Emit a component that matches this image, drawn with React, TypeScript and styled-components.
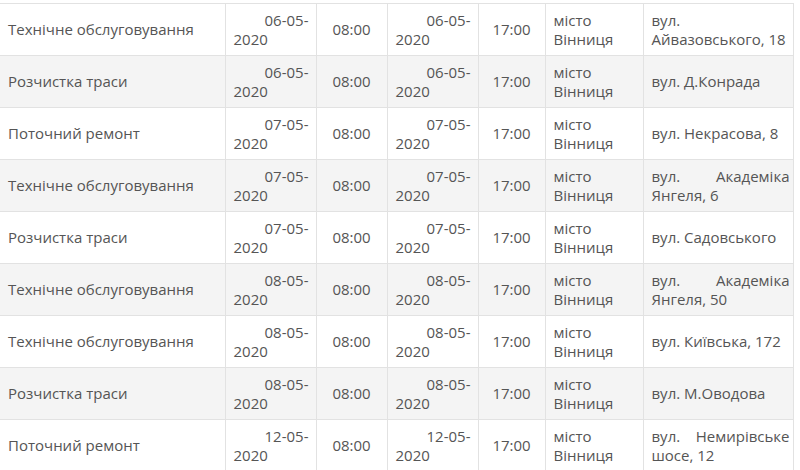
import { FC } from 'react';
import styled, { createGlobalStyle } from 'styled-components';

type Row = {
  work: string;
  startDate: string;
  startTime: string;
  endDate: string;
  endTime: string;
  city: string;
  street: string;
};

const columnWidths = [225, 91, 71, 91, 67, 98, 150];

const rows: Row[] = [
  { work: 'Технічне обслуговування', startDate: '06-05-2020', startTime: '08:00', endDate: '06-05-2020', endTime: '17:00', city: 'місто Вінниця', street: 'вул. Айвазовського, 18' },
  { work: 'Розчистка траси', startDate: '06-05-2020', startTime: '08:00', endDate: '06-05-2020', endTime: '17:00', city: 'місто Вінниця', street: 'вул. Д.Конрада' },
  { work: 'Поточний ремонт', startDate: '07-05-2020', startTime: '08:00', endDate: '07-05-2020', endTime: '17:00', city: 'місто Вінниця', street: 'вул. Некрасова, 8' },
  { work: 'Технічне обслуговування', startDate: '07-05-2020', startTime: '08:00', endDate: '07-05-2020', endTime: '17:00', city: 'місто Вінниця', street: 'вул. Академіка Янгеля, 6' },
  { work: 'Розчистка траси', startDate: '07-05-2020', startTime: '08:00', endDate: '07-05-2020', endTime: '17:00', city: 'місто Вінниця', street: 'вул. Садовського' },
  { work: 'Технічне обслуговування', startDate: '08-05-2020', startTime: '08:00', endDate: '08-05-2020', endTime: '17:00', city: 'місто Вінниця', street: 'вул. Академіка Янгеля, 50' },
  { work: 'Технічне обслуговування', startDate: '08-05-2020', startTime: '08:00', endDate: '08-05-2020', endTime: '17:00', city: 'місто Вінниця', street: 'вул. Київська, 172' },
  { work: 'Розчистка траси', startDate: '08-05-2020', startTime: '08:00', endDate: '08-05-2020', endTime: '17:00', city: 'місто Вінниця', street: 'вул. М.Оводова' },
  { work: 'Поточний ремонт', startDate: '12-05-2020', startTime: '08:00', endDate: '12-05-2020', endTime: '17:00', city: 'місто Вінниця', street: 'вул. Немирівське шосе, 12' },
];

const GlobalStyle = createGlobalStyle`
  body {
    margin: 0;
    background: #fff;
    font-family: 'Open Sans', 'Noto Sans', sans-serif;
  }
`;

// дата ламається після другого дефіса: перший рядок праворуч, рік ліворуч
const DateValue: FC<{ value: string }> = ({ value }) => (
  <>
    <DateHead>{value.slice(0, 6)}</DateHead>
    <DateTail>{value.slice(6)}</DateTail>
  </>
);

const App: FC = () => {
  return (
    <Root>
      <GlobalStyle />
      <Table>
        <colgroup>
          {columnWidths.map((w, i) => (
            <Col key={i} $width={w} />
          ))}
        </colgroup>
        <tbody>
          {rows.map((row, i) => (
            <Tr key={i} $striped={i % 2 === 1}>
              <Td>{row.work}</Td>
              <Td>
                <DateValue value={row.startDate} />
              </Td>
              <TimeTd>{row.startTime}</TimeTd>
              <Td>
                <DateValue value={row.endDate} />
              </Td>
              <TimeTd>{row.endTime}</TimeTd>
              <Td>{row.city}</Td>
              <StreetTd>{row.street}</StreetTd>
            </Tr>
          ))}
        </tbody>
      </Table>
    </Root>
  );
};

const Root = styled.div`
  width: 800px;
  height: 470px;
  overflow: hidden;
  padding-top: 3px;
  box-sizing: border-box;
`;

const Table = styled.table`
  width: 793px;
  border-collapse: collapse;
  table-layout: fixed;
  font-size: 15px;
  line-height: 19px;
  color: #555;
`;

const Col = styled.col<{ $width: number }>`
  width: ${({ $width }) => $width}px;
`;

const Tr = styled.tr<{ $striped: boolean }>`
  height: 52px;
  background: ${({ $striped }) => ($striped ? '#f4f4f4' : '#fff')};
`;

const Td = styled.td`
  border: 1px solid #e2e2e2;
  padding: 6px 7px 6px 8px;
  vertical-align: middle;
  text-align: left;

  &:first-child {
    border-left: none;
  }
`;

const TimeTd = styled(Td)`
  text-align: center;
  padding-left: 4px;
  padding-right: 4px;
`;

const StreetTd = styled(Td)`
  text-align: justify;
  padding-right: 3px;
`;

const DateHead = styled.span`
  display: block;
  text-align: right;
`;

const DateTail = styled.span`
  display: block;
  text-align: left;
`;

export default App;
